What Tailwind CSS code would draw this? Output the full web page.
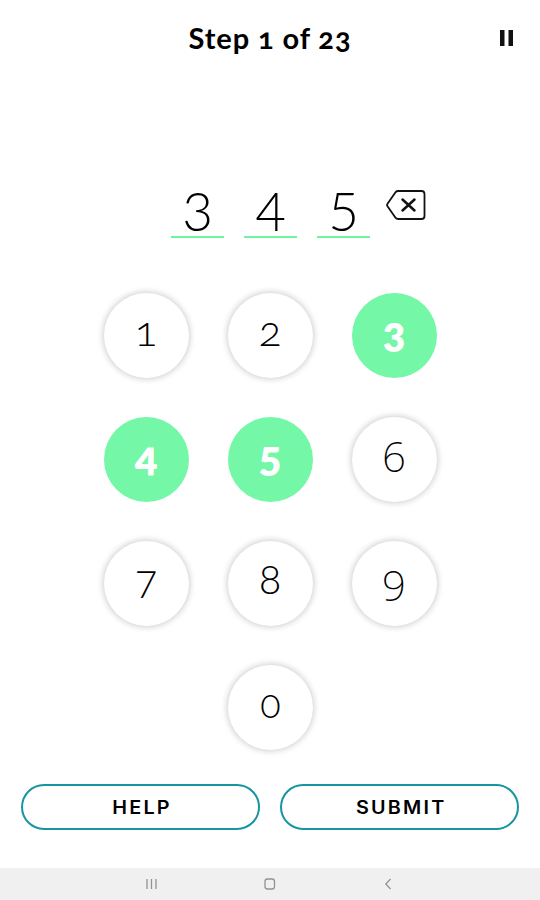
<!DOCTYPE html>
<html lang="en">
  <head>
    <title>Step 1 of 23</title>
    <meta charset="utf-8">
    <meta name="viewport" content="width=device-width, initial-scale=1.0">
    <script src="https://cdn.jsdelivr.net/npm/@tailwindcss/browser@4"></script>
  </head>
  <body class="flex h-[900px] w-[540px] flex-col overflow-hidden bg-white font-['Lato',sans-serif] text-black">
    <header class="grid h-[76px] grid-cols-[1fr_auto_1fr] items-center">
      <h1 class="col-start-2 pb-px text-[29px] font-bold tracking-[0.9px] oldstyle-nums">Step 1 of 23</h1>
      <button class="mr-[27px] justify-self-end" aria-label="Pause">
        <svg class="block h-4 w-[13px]" viewBox="0 0 13 16">
          <path d="M0 0h4.500v16H0zM8.500 0H13v16H8.500z" fill="#111" />
        </svg>
      </button>
    </header>

    <!-- Entered code -->
    <div class="mt-[108px] ml-[171px] flex h-[54px] gap-5">
      <div class="h-[54px] w-[53px] border-b-2 border-[#6ff5a2] text-center text-[53px] leading-[54px] font-light">3</div>
      <div class="h-[54px] w-[53px] border-b-2 border-[#6ff5a2] text-center text-[53px] leading-[54px] font-light">4</div>
      <div class="h-[54px] w-[53px] border-b-2 border-[#6ff5a2] text-center text-[53px] leading-[54px] font-light">5</div>
      <button class="-ml-1 self-start pt-[5px]" aria-label="Delete">
        <svg class="block h-8 w-10" viewBox="0 0 40 32" fill="none" stroke="#111" stroke-linejoin="round" stroke-linecap="round">
          <path d="M12 2h23.500a3 3 0 0 1 3 3v22a3 3 0 0 1-3 3H12a3 3 0 0 1-2.300-1.100L1.500 17.200a2 2 0 0 1 0-2.400L9.700 3.100A3 3 0 0 1 12 2z" stroke-width="1.800" />
          <path d="M16.500 10.500l12 11M28.500 10.500l-12 11" stroke-width="2.500" />
        </svg>
      </button>
    </div>

    <!-- Keypad -->
    <div class="mt-[54.5px] grid grid-cols-[repeat(3,85px)] justify-center gap-[39px] text-center text-[42px] leading-[72px] font-light oldstyle-nums">
      <button class="h-[85px] rounded-full pb-[10px] shadow-[0_0_6px_1px_rgba(0,0,0,0.2)]">1</button>
      <button class="h-[85px] rounded-full pb-[10px] shadow-[0_0_6px_1px_rgba(0,0,0,0.2)]">2</button>
      <button class="h-[85px] rounded-full bg-[#74f7a6] pb-[9px] font-extrabold text-white">3</button>
      <button class="h-[85px] rounded-full bg-[#74f7a6] pb-[9px] font-extrabold text-white">4</button>
      <button class="h-[85px] rounded-full bg-[#74f7a6] pb-[9px] font-extrabold text-white">5</button>
      <button class="h-[85px] rounded-full pb-[7px] font-['Noto_Sans',sans-serif] font-extralight lining-nums shadow-[0_0_6px_1px_rgba(0,0,0,0.2)]">6</button>
      <button class="h-[85px] rounded-full pb-[10px] shadow-[0_0_6px_1px_rgba(0,0,0,0.2)]">7</button>
      <button class="h-[85px] rounded-full pb-[10px] shadow-[0_0_6px_1px_rgba(0,0,0,0.2)]">8</button>
      <button class="h-[85px] rounded-full pt-[3px] font-['Noto_Sans',sans-serif] font-extralight lining-nums shadow-[0_0_6px_1px_rgba(0,0,0,0.2)]">9</button>
      <button class="col-start-2 h-[85px] rounded-full pb-[10px] shadow-[0_0_6px_1px_rgba(0,0,0,0.2)]"><span class="inline-block scale-x-90">0</span></button>
    </div>

    <div class="mt-[34.5px] flex gap-5 px-[21px] font-['Inter',sans-serif] text-[18px] font-semibold tracking-[2px]">
      <button class="h-[46px] w-[239px] rounded-full border-2 border-[#1795a0] pt-px pl-[3px]"><span class="inline-block scale-x-110">HELP</span></button>
      <button class="h-[46px] w-[239px] rounded-full border-2 border-[#1795a0] pt-px pl-[3px]"><span class="inline-block scale-x-110">SUBMIT</span></button>
    </div>

    <!-- System navigation bar -->
    <nav class="mt-auto flex h-8 items-center bg-[#f0f0f0]">
      <svg class="h-8 w-[540px]" viewBox="0 0 540 32" fill="none" stroke="#929292" stroke-width="1.300">
        <path d="M147 11v10M151.500 11v10M156 11v10" />
        <rect x="265" y="11" width="9.500" height="10" rx="2.500" />
        <path d="M390.500 11l-4.700 5 4.700 5" />
      </svg>
    </nav>
  </body>
</html>
